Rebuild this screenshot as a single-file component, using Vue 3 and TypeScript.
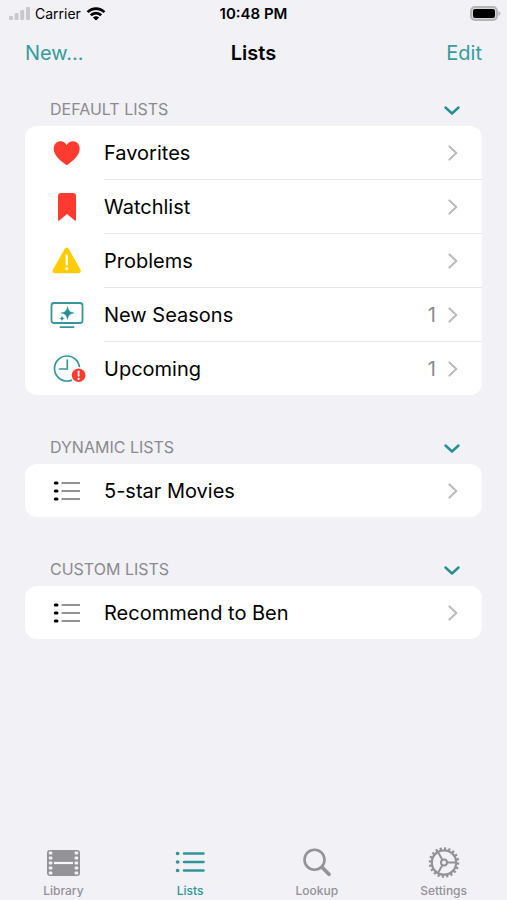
<script setup lang="ts">
import { ref } from 'vue'

type IconName = 'heart' | 'bookmark' | 'warning' | 'tv' | 'clock' | 'list'

interface ListItem {
  label: string
  icon: IconName
  count?: number
}

interface ListSection {
  title: string
  open: boolean
  items: ListItem[]
}

type TabName = 'Library' | 'Lists' | 'Lookup' | 'Settings'

const sections = ref<ListSection[]>([
  {
    title: 'Default Lists',
    open: true,
    items: [
      { label: 'Favorites', icon: 'heart' },
      { label: 'Watchlist', icon: 'bookmark' },
      { label: 'Problems', icon: 'warning' },
      { label: 'New Seasons', icon: 'tv', count: 1 },
      { label: 'Upcoming', icon: 'clock', count: 1 },
    ],
  },
  { title: 'Dynamic Lists', open: true, items: [{ label: '5-star Movies', icon: 'list' }] },
  { title: 'Custom Lists', open: true, items: [{ label: 'Recommend to Ben', icon: 'list' }] },
])

const tabs: TabName[] = ['Library', 'Lists', 'Lookup', 'Settings']
const activeTab = ref<TabName>('Lists')
const perforations = [3, 8, 13, 18, 23]
</script>

<template>
  <div class="screen">
    <div class="status">
      <div class="carrier">
        <svg class="signal" width="21" height="14" viewBox="0 0 21 14" aria-hidden="true">
          <rect x="0" y="9" width="4" height="4" rx="1" />
          <rect x="5.600" y="6" width="4" height="7" rx="1" />
          <rect x="11.200" y="3" width="4" height="10" rx="1" />
          <rect x="17" y="0" width="4" height="13" rx="1" />
        </svg>
        <span>Carrier</span>
        <svg width="20" height="14" viewBox="0 0 20 14" aria-hidden="true">
          <path d="M1.600 5.100a12 12 0 0 1 16.800 0M4.800 8.300a7.400 7.400 0 0 1 10.400 0" fill="none" stroke="#000" stroke-width="2.700" />
          <path d="M10 13.600 6.900 10.500a4.400 4.400 0 0 1 6.200 0z" />
        </svg>
      </div>
      <time class="clock">10:48 PM</time>
      <svg class="battery" width="31" height="16" viewBox="0 0 31 16" aria-hidden="true">
        <rect x="1" y="1" width="26" height="13" rx="4" fill="#d6d6d9" stroke="#b5b5b9" stroke-width="2" />
        <rect x="3" y="3" width="22" height="9" rx="2" />
        <path d="M28.500 5c2.400.7 2.400 4.300 0 5z" fill="#b5b5b9" />
      </svg>
    </div>

    <header class="nav">
      <button type="button" class="nav-action">New...</button>
      <h1>Lists</h1>
      <button type="button" class="nav-action end">Edit</button>
    </header>

    <main>
      <section v-for="section in sections" :key="section.title">
        <h2>
          <button
            type="button"
            class="section-head"
            :aria-expanded="section.open"
            @click="section.open = !section.open"
          >
            <span>{{ section.title }}</span>
            <svg :class="{ closed: !section.open }" width="16" height="16" viewBox="0 0 16 16" aria-hidden="true">
              <path d="M1.500 6.500 8 12.500l6.500-6" fill="none" stroke="#259092" stroke-width="2.400" stroke-linecap="round" stroke-linejoin="round" />
            </svg>
          </button>
        </h2>
        <ul v-if="section.open" class="card">
          <li v-for="item in section.items" :key="item.label">
            <a href="#" class="row" @click.prevent>
              <svg class="row-icon" width="36" height="32" viewBox="0 0 36 32" aria-hidden="true">
                <path
                  v-if="item.icon === 'heart'"
                  d="M16.700 28.200C11.200 24.500 3.700 18.800 3.700 11.700c0-4.300 3-7.400 6.700-7.400 2.800 0 5.100 1.500 6.300 4 1.200-2.500 3.500-4 6.300-4 3.700 0 6.700 3.100 6.700 7.400 0 7.100-7.500 12.800-13 16.500z"
                  fill="#ff3b30"
                />
                <path
                  v-else-if="item.icon === 'bookmark'"
                  d="M11 2h12q3 0 3 3v23.500q0 2-1.600.7L17 23l-7.400 6.200Q8 30.500 8 28.500V5q0-3 3-3z"
                  fill="#ff3b30"
                />
                <template v-else-if="item.icon === 'warning'">
                  <path d="M14.400 4.200q2.300-3.300 4.600 0l11.200 20q1.600 3.800-2 4h-23q-3.600-.2-2-4z" fill="#ffcc00" />
                  <path d="M16.700 10.500v9" stroke="#fff" stroke-width="2.200" stroke-linecap="round" />
                  <circle cx="16.700" cy="23.500" r="1.500" fill="#fff" />
                </template>
                <template v-else-if="item.icon === 'tv'">
                  <rect x="1.500" y="4" width="31" height="20" rx="2.500" fill="none" stroke="#359799" stroke-width="1.800" />
                  <path d="M10.500 28.200h13" stroke="#359799" stroke-width="1.800" stroke-linecap="round" />
                  <path d="M17.500 7.500c1 4.300 2 5.500 6.500 6.500-4.500 1-5.500 2.200-6.500 6.500-1-4.300-2-5.500-6.500-6.500 4.500-1 5.500-2.200 6.500-6.500z" fill="#259092" stroke="#259092" stroke-width=".4" />
                  <path d="M12 16.600c.5 2 1 2.500 3 3-2 .5-2.500 1-3 3-.5-2-1-2.500-3-3 2-.5 2.500-1 3-3z" fill="#259092" stroke="#fff" stroke-width=".3" />
                </template>
                <template v-else-if="item.icon === 'clock'">
                  <circle cx="17" cy="15.500" r="12.500" fill="none" stroke="#359799" stroke-width="1.700" />
                  <path d="M17.300 7v9h-7.800" fill="none" stroke="#359799" stroke-width="1.700" stroke-linecap="round" stroke-linejoin="round" />
                  <circle cx="28.600" cy="22.300" r="8.300" fill="#fff" />
                  <circle cx="28.600" cy="22.300" r="6.800" fill="#ff3b30" />
                  <path d="M28.600 18.500v4.300" stroke="#fff" stroke-width="1.800" stroke-linecap="round" />
                  <circle cx="28.600" cy="25.900" r="1.100" fill="#fff" />
                </template>
                <template v-else>
                  <path d="M11.500 8h18.500M11.500 16h18.500M11.500 24h18.500" stroke="#929295" stroke-width="1.800" />
                  <path d="M5.300 8h1.700M5.300 16h1.700M5.300 24h1.700" stroke="#000" stroke-width="3" stroke-linecap="round" />
                </template>
              </svg>
              <span class="row-body">
                <span class="row-label">{{ item.label }}</span>
                <span v-if="item.count" class="count">{{ item.count }}</span>
                <svg width="10" height="16" viewBox="0 0 10 16" aria-hidden="true">
                  <path d="M1.500 1.500 8.300 8 1.500 14.500" fill="none" stroke="#bdbdc0" stroke-width="2.200" stroke-linecap="round" stroke-linejoin="round" />
                </svg>
              </span>
            </a>
          </li>
        </ul>
      </section>
    </main>

    <nav class="tabs">
      <button
        v-for="tab in tabs"
        :key="tab"
        type="button"
        :class="{ active: tab === activeTab }"
        @click="activeTab = tab"
      >
        <svg width="34" height="32" viewBox="0 0 34 32" aria-hidden="true">
          <g v-if="tab === 'Library'" transform="translate(1 3)">
            <rect x="0" y="0" width="33" height="26" rx="3" fill="currentColor" />
            <g v-for="y in perforations" :key="y" fill="#f1f1f6">
              <rect x="1.800" :y="y - 1.500" width="3.600" height="3" rx="1" />
              <rect x="27.600" :y="y - 1.500" width="3.600" height="3" rx="1" />
            </g>
            <path d="M7 13h19" stroke="#f7f7fa" stroke-width="2.200" />
          </g>
          <g v-else-if="tab === 'Lists'" stroke="currentColor" stroke-linecap="round">
            <path d="M11 6.500h19.500M11 15h19.500M11 23.500h19.500" stroke-width="2.500" />
            <path d="M4.500 6.500h.2M4.500 15h.2M4.500 23.500h.2" stroke-width="3.600" />
          </g>
          <g v-else-if="tab === 'Lookup'" fill="none" stroke="currentColor">
            <circle cx="14.500" cy="12.700" r="10" stroke-width="2.600" />
            <path d="m22.300 20.500 6.700 6.700" stroke-width="3.700" stroke-linecap="round" />
          </g>
          <g v-else fill="none" stroke="currentColor" stroke-width="2">
            <circle cx="17" cy="15.500" r="12.200" stroke-width="2.200" />
            <circle cx="17" cy="15.500" r="14" pathLength="80" stroke-dasharray="2 2" stroke-width="2.600" />
            <circle cx="17" cy="15.500" r="3" />
            <path d="M20 15.500h9M15.500 12.900 10.900 5M15.500 18.100 10.900 26" />
          </g>
        </svg>
        <span>{{ tab }}</span>
      </button>
    </nav>
  </div>
</template>

<style>
body {
  margin: 0;
  background: #f1f1f6;
}
</style>

<style scoped>
.screen {
  min-height: 100vh;
  display: flex;
  flex-direction: column;
  background: #f1f1f6;
  color: #000;
  font-family: Inter, "Liberation Sans", sans-serif;
}

button {
  padding: 0;
  border: 0;
  background: none;
  font: inherit;
  color: inherit;
  cursor: pointer;
}

.status {
  display: grid;
  grid-template-columns: 1fr auto 1fr;
  align-items: center;
  height: 27px;
  padding: 0 6px;
  font-size: 14px;
}

.carrier {
  display: flex;
  align-items: center;
  gap: 5px;
  padding-left: 3px;
}

.signal {
  fill: #c9c9cd;
}

.clock {
  font-size: 15px;
  font-weight: 600;
}

.battery {
  justify-self: end;
}

.nav {
  display: grid;
  grid-template-columns: 1fr auto 1fr;
  align-items: center;
  height: 52px;
  padding: 0 25px;
  font-size: 20px;
}

.nav h1 {
  margin: 0;
  font-size: 20px;
  font-weight: 600;
}

.nav-action {
  justify-self: start;
  color: #369c9d;
}

.nav-action.end {
  justify-self: end;
}

main {
  flex: 1;
  padding: 0 25px;
  margin-top: -22px;
}

h2 {
  margin: 0;
  padding: 42px 0 7px;
  font-size: 16px;
  font-weight: 400;
}

.section-head {
  display: flex;
  align-items: center;
  justify-content: space-between;
  width: 100%;
  height: 20px;
  padding: 0 22px 0 25px;
  color: #8a8a8f;
  text-transform: uppercase;
}

.section-head .closed {
  transform: rotate(-90deg);
}

.card {
  margin: 0;
  padding: 0;
  list-style: none;
  background: #fff;
  border-radius: 12px;
}

.row {
  display: flex;
  align-items: center;
  padding-left: 25px;
  color: inherit;
  text-decoration: none;
}

.row-icon {
  flex: none;
  margin-right: 18px;
}

.row-body {
  flex: 1;
  display: flex;
  align-items: center;
  gap: 12px;
  height: 53px;
  padding-right: 24px;
  font-size: 20px;
}

li:not(:last-child) .row-body {
  border-bottom: 1px solid #e6e6e9;
}

.row-label {
  flex: 1;
}

.count {
  color: #8a8a8f;
}

.tabs {
  display: grid;
  grid-template-columns: repeat(4, 1fr);
  padding-bottom: 1px;
}

.tabs button {
  display: flex;
  flex-direction: column;
  align-items: center;
  gap: 4px;
  font-size: 12px;
  line-height: 16px;
  font-weight: 500;
  color: #929297;
}

.tabs button.active {
  color: #319596;
}
</style>
